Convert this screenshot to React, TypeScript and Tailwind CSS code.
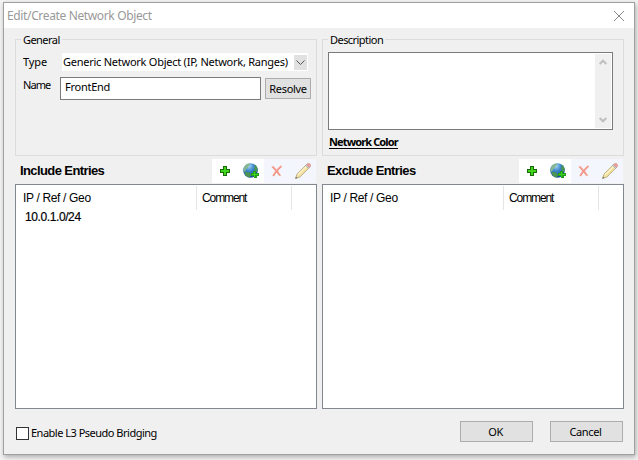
import type { ReactNode } from "react";

const ui = "font-['Noto_Sans','Open_Sans',sans-serif]";
const sans = "font-['Liberation_Sans',Arial,sans-serif]";

function GroupBox({ title, children }: { title: string; children: ReactNode }) {
  return (
    <section className="h-[117px] w-[302px] border border-[#dcdcdc]">
      <h2 className="-mt-[8px] ml-[5px] h-4 w-fit bg-[#f0f0f0] px-[2px] text-[11px] leading-[15px] tracking-[-0.55px]">{title}</h2>
      {children}
    </section>
  );
}

function PlusIcon() {
  return (
    <svg className="size-4" viewBox="0 0 16 16" shapeRendering="crispEdges">
      <path d="M6 3h4v3h3v4h-3v3H6v-3H3V6h3z" fill="#176c0a" />
      <path d="M7 4h2v3h3v2H9v3H7V9H4V7h3z" fill="#43d51b" />
    </svg>
  );
}

function GlobeIcon() {
  return (
    <svg className="size-4" viewBox="0 0 16 16">
      <defs>
        <radialGradient id="globe" cx="40%" cy="20%" r="75%">
          <stop offset="0" stopColor="#a9d4f2" />
          <stop offset=".45" stopColor="#3b86cc" />
          <stop offset="1" stopColor="#1c4f96" />
        </radialGradient>
      </defs>
      <circle cx="7.500" cy="7.500" r="7.300" fill="url(#globe)" />
      <path d="M2 3C3 1 5 .4 7 .5L7 2 5.500 3 5 5 3 6 2.500 8 1 9C0 7 1 4 2 3z" fill="#86b98f" />
      <path d="M11 1.500c3 1 4 4 3.500 6.500L13 9l-1-1-1-3 1-1zM2.500 9l4 .5 1.500 3-2 2C4 14 2 12 1.500 10z" fill="#4c9552" />
      <path d="M10 8h3v2h3v3h-2v2h-3v-2H8v-3h2z" fill="#239a1c" />
      <path d="M11 9h1v2h3v1h-3v2h-1v-2H9v-1h2z" fill="#39d51d" />
    </svg>
  );
}

function DeleteIcon() {
  return (
    <svg className="size-4" viewBox="0 0 16 16">
      <path d="M3.500 3.500c2 2 5 4.500 7.500 9M12.500 3C9 6 6 9 4.300 13" fill="none" stroke="#f6aa9e" strokeWidth="2" />
      <path d="M3 3.500L11.500 13M12 3.500L4 13" fill="none" stroke="#ee8778" strokeWidth=".8" />
    </svg>
  );
}

function PencilIcon() {
  return (
    <svg className="size-4" viewBox="0 0 16 16">
      <path d="M.5 15.500L2 11 11.500 1.500l3 3L5 14z" fill="#f1dfa0" stroke="#b5a681" strokeWidth=".8" />
      <path d="M3 12L12 3" stroke="#fff5c8" strokeWidth="1.200" />
      <path d="M10.500 2.500l3 3L15 4l-3-3z" fill="#c8cbd1" stroke="#9b9da5" strokeWidth=".5" />
      <path d="M11.500 1.500l1-1h2l1 1v2l-1 1z" fill="#eca19a" stroke="#ca8682" strokeWidth=".5" />
      <path d="M.3 15.700l.7-2.200 1.500 1.500z" fill="#77736f" />
    </svg>
  );
}

function Entries({ title, row }: { title: string; row?: string }) {
  return (
    <section className={`w-[302px] ${sans}`}>
      <div className="mb-px flex h-[24px] justify-between">
        <h2 className="pl-[5px] text-[13px] leading-[24px] font-bold tracking-[-0.6px]">{title}</h2>
        <div className="mr-px flex">
          <div className="flex w-[52px] items-center gap-[10px] bg-white pl-[5px]"><PlusIcon /><GlobeIcon /></div>
          <div className="flex w-[52px] items-center gap-[10px] bg-[#f3f6fc] pl-[5px]"><DeleteIcon /><PencilIcon /></div>
        </div>
      </div>
      <div className="h-[225px] border border-[#828790] bg-white pt-px text-[12px]">
        <div className="flex h-6 leading-[25px]">
          <div className="w-[181px] border-r border-[#e5e5e5] pl-[7px] tracking-[-0.34px]">IP / Ref / Geo</div>
          <div className="w-[95px] border-r border-[#e5e5e5] pl-[5px] tracking-[-1.1px]">Comment</div>
        </div>
        {row && <div className="pl-[9px] leading-[14px] tracking-[-0.4px] [-webkit-text-stroke:0.2px_black]">{row}</div>}
      </div>
    </section>
  );
}

function Chevron({ up = false }: { up?: boolean }) {
  return (
    <svg className="h-[7px] w-[8px]" viewBox="0 0 8 7">
      <path d={up ? "M.7 5L4 1.700 7.300 5" : "M.7 2L4 5.300 7.300 2"} fill="none" stroke="#bfbfbf" strokeWidth="2" />
    </svg>
  );
}

export default function App() {
  return (
    <main className={`h-[460px] w-[638px] overflow-hidden bg-[#f4f4f4] pt-[2px] pl-[3px] text-[11px] text-black ${ui}`}>
      <div className="h-[453px] w-[632px] border border-[#a0a0a0] bg-[#f0f0f0] shadow-[1px_2px_5px_rgba(0,0,0,0.3)]">
        <header className="flex h-[25px] items-center justify-between bg-white pr-[10px] pl-[3px]">
          <h1 className="text-[12px] leading-4 tracking-[-0.36px] text-[#999]">Edit/Create Network Object</h1>
          <svg className="size-[10px]" viewBox="0 0 10 10"><path d="M0 0l10 10M10 0L0 10" stroke="#888" /></svg>
        </header>
        <div className="flex gap-[5px] pt-[11px] pl-[11px]">
          <GroupBox title="General">
            <div className="mt-[5px] flex h-[18px] pl-[7px]">
              <span className="w-[39px] leading-[17px] tracking-[-0.1px]">Type</span>
              <div className="flex w-[246px] items-center justify-between bg-white pr-px pl-[1px]">
                <span className="leading-4 whitespace-nowrap tracking-[-0.25px]">Generic Network Object (IP, Network, Ranges)</span>
                <span className="flex h-[15px] w-[13px] shrink-0 items-center justify-center bg-[#e1e1e1]">
                  <svg className="h-[5px] w-[9px]" viewBox="0 0 9 5"><path d="M.5.5l4 4 4-4" fill="none" stroke="#555" /></svg>
                </span>
              </div>
            </div>
            <div className="mt-[6px] flex h-[23px] pl-[7px]">
              <span className="w-[37px] leading-[16px] tracking-[-0.9px]">Name</span>
              <div className="w-[201px] border border-[#7a7a7a] bg-white pl-[4px] leading-[18px] tracking-[-0.25px]">FrontEnd</div>
              <button className="mt-px ml-[4px] h-[21px] w-[46px] border border-[#adadad] bg-[#e1e1e1] leading-[19px] tracking-[-0.3px]">Resolve</button>
            </div>
          </GroupBox>
          <GroupBox title="Description">
            <div className="mt-1 ml-[5px] flex h-[78px] w-[285px] justify-end border border-[#7a7a7a] bg-white p-px">
              <div className="flex w-4 flex-col items-center justify-between bg-[#f0f0f0] py-[5px]">
                <Chevron up /><Chevron />
              </div>
            </div>
            <a className="mt-[5px] ml-[6px] block w-fit border-b border-black leading-[13px] font-bold tracking-[-0.88px]">Network Color</a>
          </GroupBox>
        </div>
        <div className="mt-[3px] flex gap-[5px] pl-[11px]">
          <Entries title="Include Entries" row="10.0.1.0/24" />
          <Entries title="Exclude Entries" />
        </div>
        <footer className="mt-3 flex h-[21px] pl-3">
          <label className="flex w-[444px] pt-[6px]">
            <span className="size-[13px] border border-[#333] bg-white" />
            <span className="ml-[2px] leading-[12px] tracking-[-0.5px]">Enable L3 Pseudo Bridging</span>
          </label>
          <button className="h-[21px] w-[73px] border border-[#adadad] bg-[#e1e1e1] pr-[2px] leading-[19px] tracking-[-0.4px]">OK</button>
          <button className="ml-[17px] h-[21px] w-[73px] border border-[#adadad] bg-[#e1e1e1] pr-[2px] leading-[19px] tracking-[-0.35px]">Cancel</button>
        </footer>
      </div>
    </main>
  );
}
